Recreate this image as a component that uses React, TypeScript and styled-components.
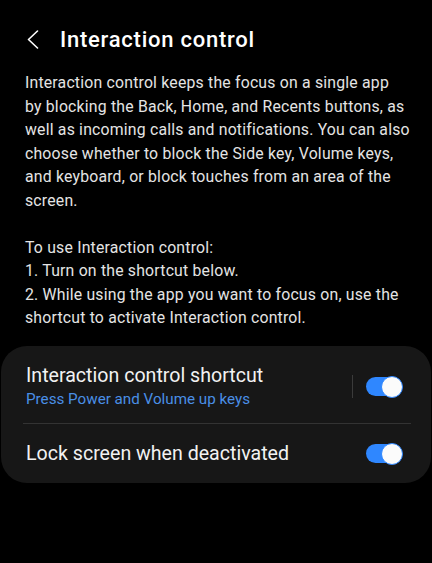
import React from "react";
import styled, { createGlobalStyle } from "styled-components";

const GlobalStyle = createGlobalStyle`
  html, body {
    margin: 0;
    padding: 0;
    background: #000;
  }
  body {
    font-family: Roboto, "Noto Sans", sans-serif;
    -webkit-font-smoothing: antialiased;
  }
`;

const Screen = styled.div`
  width: 432px;
  height: 563px;
  background: #000;
  color: #fff;
  display: flex;
  flex-direction: column;
  overflow: hidden;
`;

const Header = styled.header`
  display: flex;
  align-items: center;
  height: 40px;
  padding: 19px 0 0 26px;
  gap: 20px;
`;

const BackButton = styled.button`
  display: flex;
  align-items: center;
  justify-content: center;
  width: 14px;
  height: 20px;
  padding: 0;
  border: none;
  background: none;
  color: #fff;
`;

const Title = styled.h1`
  margin: 0;
  font-size: 22px;
  font-weight: 500;
  color: #fff;
  letter-spacing: 0.75px;
`;

const Description = styled.div`
  padding: 12px 0 0 25px;
  font-size: 15.8px;
  line-height: 23.5px;
  letter-spacing: 0.2px;
  color: #e4e4e4;
  white-space: nowrap;
`;

const Paragraph = styled.p`
  margin: 0;
  & + & {
    margin-top: 23.5px;
  }
`;

const Card = styled.section`
  margin: 16.5px 1px 0 1px;
  background: #171717;
  border-radius: 26px;
  display: flex;
  flex-direction: column;
  padding: 0 20px 0 22px;
`;

const Row = styled.div<{ $tall?: boolean }>`
  display: flex;
  align-items: center;
  height: ${(p) => (p.$tall ? "77px" : "59px")};
  box-sizing: border-box;
  padding: ${(p) => (p.$tall ? "4px 8px 0 3px" : "0 8px 0 3px")};
`;

const RowText = styled.div`
  flex: 1;
  display: flex;
  flex-direction: column;
  gap: 1px;
`;

const RowTitle = styled.div`
  font-size: 19.6px;
  color: #f2f2f2;
  line-height: 24px;
`;

const RowSub = styled.div`
  font-size: 15.2px;
  color: #4a8fe6;
  line-height: 20px;
`;

const RowDivider = styled.div`
  height: 1px;
  background: #333;
`;

const VerticalRule = styled.div`
  width: 1px;
  height: 23px;
  background: #3b3b3b;
  margin-right: 13px;
`;

const Switch = styled.div`
  position: relative;
  width: 37px;
  height: 23px;
  display: flex;
  align-items: center;
`;

const Track = styled.div`
  width: 31px;
  height: 19px;
  border-radius: 10px;
  background: #2f87ff;
`;

const Thumb = styled.div`
  position: absolute;
  right: 0;
  top: 0.5px;
  box-sizing: border-box;
  width: 22px;
  height: 22px;
  border-radius: 50%;
  background: #fbfbfb;
  border: 1.5px solid #2f87ff;
`;

const Toggle = () => (
  <Switch>
    <Track />
    <Thumb />
  </Switch>
);

export default function App() {
  return (
    <Screen>
      <GlobalStyle />
      <Header>
        <BackButton aria-label="Back">
          <svg width="12" height="19" viewBox="0 0 12 19" fill="none">
            <path d="M10.5 1 L1.5 9.5 L10.5 18" stroke="#fff" strokeWidth="1.6" strokeLinecap="round" strokeLinejoin="round" />
          </svg>
        </BackButton>
        <Title>Interaction control</Title>
      </Header>
      <Description>
        <Paragraph>
          Interaction control keeps the focus on a single app
          <br />
          by blocking the Back, Home, and Recents buttons, as
          <br />
          well as incoming calls and notifications. You can also
          <br />
          choose whether to block the Side key, Volume keys,
          <br />
          and keyboard, or block touches from an area of the
          <br />
          screen.
        </Paragraph>
        <Paragraph>
          To use Interaction control:
          <br />
          1. Turn on the shortcut below.
          <br />
          2. While using the app you want to focus on, use the
          <br />
          shortcut to activate Interaction control.
        </Paragraph>
      </Description>
      <Card>
        <Row $tall>
          <RowText>
            <RowTitle>Interaction control shortcut</RowTitle>
            <RowSub>Press Power and Volume up keys</RowSub>
          </RowText>
          <VerticalRule />
          <Toggle />
        </Row>
        <RowDivider />
        <Row>
          <RowText>
            <RowTitle>Lock screen when deactivated</RowTitle>
          </RowText>
          <Toggle />
        </Row>
      </Card>
    </Screen>
  );
}
